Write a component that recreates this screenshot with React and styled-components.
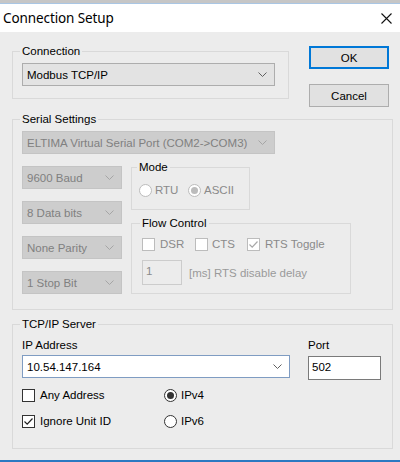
import React from "react";
import styled, { createGlobalStyle } from "styled-components";

const Global = createGlobalStyle`
  html, body { margin: 0; padding: 0; background: #ffffff; }
  * { box-sizing: border-box; }
`;

const Window = styled.div`
  width: 400px;
  height: 462px;
  display: flex;
  flex-direction: column;
  font-family: "Liberation Sans", Arial, sans-serif;
  font-size: 11.5px;
  color: #000;
  overflow: hidden;
`;

const TopStrip = styled.div`
  height: 4px;
  background: #c6c6c6;
  border-bottom: 1px solid #a9c6e4;
`;

const TitleBar = styled.div`
  height: 28px;
  background: #ffffff;
  display: flex;
  align-items: center;
  justify-content: space-between;
  padding: 0 8px 0 3px;
`;

const Title = styled.div`
  font-family: "Noto Sans", "Open Sans", sans-serif;
  font-size: 13.5px;
  color: #000;
  letter-spacing: -0.1px;
`;

const Body = styled.div`
  height: 428px;
  background: #ececec;
  padding: 0 8px 0 12px;
  display: flex;
  flex-direction: column;
`;

const BottomLine = styled.div`
  height: 2px;
  background: #2b79c2;
`;

const TopRow = styled.div`
  display: flex;
  align-items: flex-start;
  margin-top: 12px;
`;

const Group = styled.fieldset`
  margin: ${(p) => p.$mt || 0}px 0 0 0;
  border: 1px solid #d9d9d9;
  width: ${(p) => p.$w}px;
  min-width: 0;
  padding: ${(p) => p.$pad};
`;

const Legend = styled.legend`
  font-size: 11.5px;
  line-height: 14px;
  padding: 0 2px;
  margin-left: -2px;
  color: #000;
`;

const ButtonCol = styled.div`
  display: flex;
  flex-direction: column;
  gap: 15px;
  margin: 2px 0 0 20px;
`;

const Button = styled.div`
  width: 80px;
  height: 23px;
  background: #e1e1e1;
  border: ${(p) => (p.$default ? "2px solid #0078d7" : "1px solid #adadad")};
  display: flex;
  align-items: center;
  justify-content: center;
  font-size: 11.5px;
`;

const Combo = styled.div`
  width: ${(p) => p.$w}px;
  height: 23px;
  display: flex;
  align-items: center;
  justify-content: space-between;
  padding: 0 7px 0 4px;
  background: ${(p) => (p.$editable ? "#ffffff" : p.$disabled ? "#cdcdcd" : "#e3e3e3")};
  border: 1px solid
    ${(p) => (p.$editable ? "#7f9cc2" : p.$disabled ? "#c4c4c4" : "#adadad")};
  color: ${(p) => (p.$disabled ? "#808080" : "#000")};
  white-space: nowrap;
  flex-shrink: 0;
`;

const Chevron = ({ disabled }) => (
  <svg width="9" height="5" viewBox="0 0 9 5">
    <path
      d="M0.5 0.5 L4.5 4.5 L8.5 0.5"
      fill="none"
      stroke={disabled ? "#a5a5a5" : "#606060"}
      strokeWidth="1"
    />
  </svg>
);

const SerialRow = styled.div`
  display: flex;
  align-items: flex-start;
  margin-top: 6px;
`;

const LeftCol = styled.div`
  display: flex;
  flex-direction: column;
  gap: 12px;
  padding-top: 6px;
`;

const RightCol = styled.div`
  display: flex;
  flex-direction: column;
  margin-left: 9px;
`;

const OptRow = styled.div`
  display: flex;
  align-items: center;
  height: 14px;
`;

const Opt = styled.label`
  display: flex;
  align-items: center;
  gap: ${(p) => p.$gap ?? 3}px;
  color: ${(p) => (p.$disabled ? "#8a8a8a" : "#000")};
  white-space: nowrap;
  width: ${(p) => (p.$w ? p.$w + "px" : "auto")};
`;

const Box = styled.span`
  width: 13px;
  height: 13px;
  border: 1px solid ${(p) => (p.$disabled ? "#bcbcbc" : "#333333")};
  background: #ffffff;
  display: flex;
  align-items: center;
  justify-content: center;
  flex-shrink: 0;
`;

const Circle = styled.span`
  width: 13px;
  height: 13px;
  border-radius: 50%;
  border: 1px solid ${(p) => (p.$disabled ? "#bcbcbc" : "#333333")};
  background: #ffffff;
  display: flex;
  align-items: center;
  justify-content: center;
  flex-shrink: 0;
`;

const Dot = styled.span`
  width: 7px;
  height: 7px;
  border-radius: 50%;
  background: ${(p) => (p.$disabled ? "#bcbcbc" : "#333333")};
`;

const Check = ({ disabled }) => (
  <svg width="11" height="11" viewBox="0 0 11 11">
    <path
      d="M1.5 5.5 L4.2 8.2 L9.5 2.5"
      fill="none"
      stroke={disabled ? "#a8a8a8" : "#222"}
      strokeWidth="1.2"
    />
  </svg>
);

const CheckBox = ({ label, checked, disabled, w, gap }) => (
  <Opt $disabled={disabled} $w={w} $gap={gap}>
    <Box $disabled={disabled}>{checked && <Check disabled={disabled} />}</Box>
    {label}
  </Opt>
);

const Radio = ({ label, checked, disabled, w, gap }) => (
  <Opt $disabled={disabled} $w={w} $gap={gap}>
    <Circle $disabled={disabled}>{checked && <Dot $disabled={disabled} />}</Circle>
    {label}
  </Opt>
);

const DelayRow = styled.div`
  display: flex;
  align-items: center;
  gap: 7px;
  margin-top: 9px;
`;

const Edit = styled.div`
  width: ${(p) => p.$w}px;
  height: ${(p) => p.$h}px;
  border: 1px solid ${(p) => (p.$disabled ? "#cccccc" : "#7a7a7a")};
  background: ${(p) => (p.$disabled ? "#ececec" : "#ffffff")};
  color: ${(p) => (p.$disabled ? "#8a8a8a" : "#000")};
  padding: 3px 0 0 3px;
  line-height: 14px;
`;

const Muted = styled.span`
  color: #9a9a9a;
`;

const AddrRow = styled.div`
  display: flex;
  align-items: flex-start;
  padding-top: 7px;
`;

const Field = styled.div`
  display: flex;
  flex-direction: column;
  gap: ${(p) => p.$gap}px;
  margin-left: ${(p) => p.$ml || 0}px;
`;

const Caption = styled.div`
  line-height: 14px;
`;

const OptGrid = styled.div`
  display: grid;
  grid-template-columns: 142px auto;
  row-gap: 12px;
  margin-top: 8px;
`;

const CloseIcon = () => (
  <svg width="11" height="11" viewBox="0 0 11 11">
    <path d="M0.5 0.5 L10.5 10.5 M10.5 0.5 L0.5 10.5" stroke="#111" strokeWidth="1.1" />
  </svg>
);

export default function App() {
  return (
    <>
      <Global />
      <Window>
        <TopStrip />
        <TitleBar>
          <Title>Connection Setup</Title>
          <CloseIcon />
        </TitleBar>
        <Body>
          <TopRow>
            <Group $w={277} $pad="5px 0 12px 9px">
              <Legend>Connection</Legend>
              <Combo $w={253}>
                Modbus TCP/IP
                <Chevron />
              </Combo>
            </Group>
            <ButtonCol>
              <Button $default>OK</Button>
              <Button>Cancel</Button>
            </ButtonCol>
          </TopRow>

          <Group $w={381} $mt={5} $pad="5px 0 15px 9px">
            <Legend>Serial Settings</Legend>
            <Combo $w={253} $disabled>
              ELTIMA Virtual Serial Port (COM2-&gt;COM3)
              <Chevron disabled />
            </Combo>
            <SerialRow>
              <LeftCol>
                <Combo $w={100} $disabled>
                  9600 Baud
                  <Chevron disabled />
                </Combo>
                <Combo $w={100} $disabled>
                  8 Data bits
                  <Chevron disabled />
                </Combo>
                <Combo $w={100} $disabled>
                  None Parity
                  <Chevron disabled />
                </Combo>
                <Combo $w={100} $disabled>
                  1 Stop Bit
                  <Chevron disabled />
                </Combo>
              </LeftCol>
              <RightCol>
                <Group $w={119} $pad="9px 0 12px 7px">
                  <Legend>Mode</Legend>
                  <OptRow>
                    <Radio label="RTU" disabled gap={3} w={49} />
                    <Radio label="ASCII" checked disabled gap={3} />
                  </OptRow>
                </Group>
                <Group $w={220} $mt={6} $pad="7px 0 8px 10px">
                  <Legend>Flow Control</Legend>
                  <OptRow>
                    <CheckBox label="DSR" disabled gap={5} w={53} />
                    <CheckBox label="CTS" disabled gap={4} w={52} />
                    <CheckBox label="RTS Toggle" checked disabled gap={5} />
                  </OptRow>
                  <DelayRow>
                    <Edit $w={40} $h={25} $disabled>
                      1
                    </Edit>
                    <Muted>[ms] RTS disable delay</Muted>
                  </DelayRow>
                </Group>
              </RightCol>
            </SerialRow>
          </Group>

          <Group $w={381} $mt={7} $pad="0 0 20px 9px">
            <Legend>TCP/IP Server</Legend>
            <AddrRow>
              <Field $gap={3}>
                <Caption>IP Address</Caption>
                <Combo $w={268} $editable>
                  10.54.147.164
                  <Chevron />
                </Combo>
              </Field>
              <Field $gap={4} $ml={18}>
                <Caption>Port</Caption>
                <Edit $w={73} $h={24}>
                  502
                </Edit>
              </Field>
            </AddrRow>
            <OptGrid>
              <OptRow>
                <CheckBox label="Any Address" gap={5} />
              </OptRow>
              <OptRow>
                <Radio label="IPv4" checked gap={4} />
              </OptRow>
              <OptRow>
                <CheckBox label="Ignore Unit ID" checked gap={5} />
              </OptRow>
              <OptRow>
                <Radio label="IPv6" gap={4} />
              </OptRow>
            </OptGrid>
          </Group>
        </Body>
        <BottomLine />
      </Window>
    </>
  );
}
